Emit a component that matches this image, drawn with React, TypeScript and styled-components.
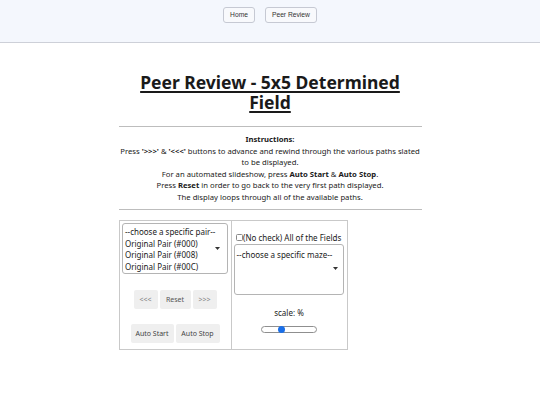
import React from "react";
import styled, { createGlobalStyle } from "styled-components";

const Global = createGlobalStyle`
  html, body { margin: 0; padding: 0; background: #ffffff; }
  body { font-family: "Noto Sans", "Open Sans", sans-serif; color: #1a1a1a; }
  * { box-sizing: border-box; }
`;

const Header = styled.header`
  height: 43px;
  background: #f4f7fd;
  border-bottom: 1px solid #cdd0d8;
  display: flex;
  justify-content: center;
  align-items: flex-start;
  gap: 10px;
  padding-top: 7px;
`;

const NavButton = styled.button`
  height: 16px;
  padding: 0 6px;
  border: 1px solid #c6c9d3;
  border-radius: 3px;
  background: #f8f9fc;
  font-family: "Liberation Sans", Arial, sans-serif;
  font-size: 6.7px;
  color: #333;
  line-height: 14px;
`;

const Main = styled.main`
  width: 303px;
  margin: 0 auto;
`;

const Title = styled.h1`
  margin: 29px 0 14px;
  font-size: 17.5px;
  line-height: 20px;
  font-weight: 700;
  text-align: center;
  text-decoration: underline;
  text-decoration-thickness: 1.5px;
  text-underline-offset: 2px;
  color: #1a1a1a;
`;

const Rule = styled.hr`
  margin: 0;
  border: none;
  border-top: 1px solid #bdbdbd;
`;

const Instructions = styled.div`
  padding: 7px 0 6px;
  font-size: 7.7px;
  line-height: 11.5px;
  text-align: center;
  color: #1a1a1a;
  p { margin: 0; }
`;

const Panel = styled.div`
  margin-top: 10px;
  width: 229px;
  display: grid;
  grid-template-columns: 112px 1fr;
  border: 1px solid #c9c9c9;
`;

const LeftCell = styled.div`
  border-right: 1px solid #c9c9c9;
  padding: 2px 2px 6px;
  display: flex;
  flex-direction: column;
  align-items: center;
`;

const RightCell = styled.div`
  padding: 11px 2px 0 2px;
  display: flex;
  flex-direction: column;
`;

const FakeSelect = styled.div<{ $w: number; $padTop: number }>`
  position: relative;
  width: ${(p) => p.$w}px;
  height: 51px;
  border: 1px solid #b4b4b4;
  border-radius: 3px;
  overflow: hidden;
  padding: ${(p) => p.$padTop}px 3px 0 2px;
  font-size: 8px;
  line-height: 11.5px;
  color: #1a1a1a;
  background: #fff;
`;

const OptionLine = styled.div`
  white-space: nowrap;
`;

const Arrow = styled.svg<{ $right: number }>`
  position: absolute;
  right: ${(p) => p.$right}px;
  top: 50%;
  margin-top: -2px;
  width: 5px;
  height: 3px;
`;

const ButtonRow = styled.div<{ $top: number }>`
  display: flex;
  justify-content: center;
  gap: 2px;
  margin-top: ${(p) => p.$top}px;
`;

const CtrlButton = styled.button<{ $tone: string; $w: number }>`
  height: 19px;
  width: ${(p) => p.$w}px;
  padding: 0;
  border: none;
  border-radius: 2px;
  background: #efefef;
  font-family: "Noto Sans", "Open Sans", sans-serif;
  font-size: 7px;
  color: ${(p) => p.$tone};
`;

const CheckRow = styled.label`
  display: flex;
  align-items: center;
  font-size: 8px;
  line-height: 11.5px;
  color: #1a1a1a;
  margin-left: 2px;
  white-space: nowrap;
`;

const CheckBox = styled.span`
  width: 7px;
  height: 7px;
  border: 1px solid #8a8a8a;
  border-radius: 1.5px;
  background: #fff;
  margin-right: 0.5px;
`;

const ScaleLabel = styled.div`
  margin-top: 12px;
  text-align: center;
  font-size: 8px;
  line-height: 11.5px;
  color: #1a1a1a;
`;

const Track = styled.div`
  position: relative;
  align-self: center;
  margin-top: 8px;
  width: 56px;
  height: 7px;
  border: 1px solid #8f8f8f;
  border-radius: 4px;
  background: #fff;
`;

const Thumb = styled.span<{ $pos: number }>`
  position: absolute;
  top: 50%;
  left: ${(p) => p.$pos}%;
  width: 7px;
  height: 7px;
  margin: -3.5px 0 0 -3.5px;
  border-radius: 50%;
  background: #1a6fe8;
`;

const DownArrow = ({ right }: { right: number }) => (
  <Arrow $right={right} viewBox="0 0 5 3">
    <path d="M0 0 L5 0 L2.5 3 Z" fill="#333" />
  </Arrow>
);

export default function App() {
  return (
    <>
      <Global />
      <Header>
        <NavButton>Home</NavButton>
        <NavButton>Peer Review</NavButton>
      </Header>
      <Main>
        <Title>Peer Review - 5x5 Determined Field</Title>
        <Rule />
        <Instructions>
          <p><b>Instructions:</b></p>
          <p>
            Press <b>'&gt;&gt;&gt;'</b> &amp; <b>'&lt;&lt;&lt;'</b> buttons to advance and rewind through the various paths slated to be displayed.
          </p>
          <p>
            For an automated slideshow, press <b>Auto Start</b> &amp; <b>Auto Stop</b>.
          </p>
          <p>
            Press <b>Reset</b> in order to go back to the very first path displayed.
          </p>
          <p>The display loops through all of the available paths.</p>
        </Instructions>
        <Rule />
        <Panel>
          <LeftCell>
            <FakeSelect $w={106} $padTop={2}>
              <OptionLine>--choose a specific pair--</OptionLine>
              <OptionLine>Original Pair (#000)</OptionLine>
              <OptionLine>Original Pair (#008)</OptionLine>
              <OptionLine>Original Pair (#00C)</OptionLine>
              <OptionLine>Original Pair (#010)</OptionLine>
              <DownArrow right={7} />
            </FakeSelect>
            <ButtonRow $top={16}>
              <CtrlButton $tone="#8a8a8a" $w={24}>&lt;&lt;&lt;</CtrlButton>
              <CtrlButton $tone="#555" $w={31}>Reset</CtrlButton>
              <CtrlButton $tone="#8a8a8a" $w={24}>&gt;&gt;&gt;</CtrlButton>
            </ButtonRow>
            <ButtonRow $top={15}>
              <CtrlButton $tone="#444" $w={43}>Auto Start</CtrlButton>
              <CtrlButton $tone="#444" $w={44}>Auto Stop</CtrlButton>
            </ButtonRow>
          </LeftCell>
          <RightCell>
            <CheckRow>
              <CheckBox />
              (No check) All of the Fields
            </CheckRow>
            <FakeSelect $w={110} $padTop={4}>
              <OptionLine>--choose a specific maze--</OptionLine>
              <DownArrow right={5} />
            </FakeSelect>
            <ScaleLabel>scale: %</ScaleLabel>
            <Track>
              <Thumb $pos={36} />
            </Track>
          </RightCell>
        </Panel>
      </Main>
    </>
  );
}
